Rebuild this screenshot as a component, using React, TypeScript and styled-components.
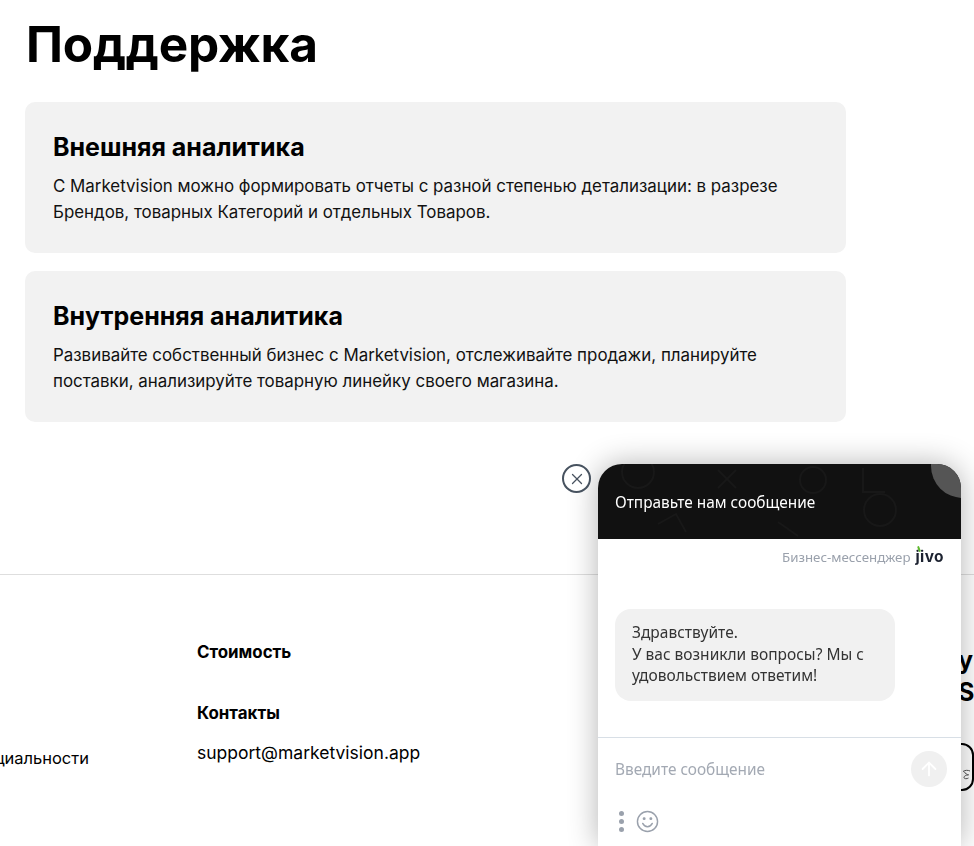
import React from 'react';
import styled, {createGlobalStyle} from "styled-components";
import {ArrowUp, X} from "lucide-react";

const GlobalStyle = createGlobalStyle`
    html, body {
        margin: 0;
        padding: 0;
        height: 100%;
        overflow: hidden;
        background: #fff;
        font-family: Inter, "Liberation Sans", sans-serif;
        color: #000;
    }
`;

const StyledPage = styled.div`
    width: 974px;
    height: 846px;
    overflow: hidden;
`;

const StyledMain = styled.main`
    height: 574px;
    box-sizing: border-box;
    padding: 10px 128px 0 25px;
`;

const StyledHeader = styled.h1`
    margin: 0 0 24px 1px;
    font-size: 49.5px;
    line-height: 68px;
    font-weight: 700;
    letter-spacing: -0.2px;
`;

const StyledCards = styled.div`
    display: flex;
    flex-direction: column;
    gap: 18px;
`;

const StyledCard = styled.section`
    height: 151px;
    box-sizing: border-box;
    padding: 28px 28px 0;
    background: #f2f2f2;
    border-radius: 10px;
`;

const StyledCardTitle = styled.h2`
    margin: 0 0 9px;
    font-size: 25px;
    line-height: 34px;
    font-weight: 700;
`;

const StyledCardText = styled.p`
    margin: 0;
    font-size: 16.9px;
    line-height: 26px;
    color: #111;
`;

const StyledFooter = styled.footer`
    height: 272px;
    box-sizing: border-box;
    border-top: 1px solid #dedede;
    display: grid;
    grid-template-columns: 89px 108px 761px 16px;
    padding-top: 66px;
`;

const StyledLegal = styled.div`
    display: flex;
    justify-content: flex-end;
    overflow: hidden;
    white-space: nowrap;
    padding-top: 105px;
    font-size: 16.5px;
    line-height: 24px;
`;

const StyledFooterColumn = styled.div`
    grid-column: 3;
    display: flex;
    flex-direction: column;
`;

const StyledFooterTitle = styled.b`
    font-size: 16.9px;
    line-height: 22px;
    font-weight: 700;
    margin-bottom: 39px;
`;

const StyledFooterLink = styled.span`
    font-size: 17.5px;
    line-height: 24px;
    margin-top: -22px;
`;

const StyledAside = styled.div`
    grid-column: 4;
    padding-top: 3px;
    display: flex;
    flex-direction: column;
    font-size: 25px;
    line-height: 32px;
    font-weight: 700;
`;

const StyledStoreButton = styled.div`
    margin: 35px 0 0 -20px;
    width: 36px;
    height: 48px;
    box-sizing: border-box;
    padding: 24px 0 0 22px;
    display: flex;
    align-items: flex-start;
    border: 2px solid #000;
    border-radius: 12px;
`;

const StyledWidget = styled.div`
    position: fixed;
    right: 13px;
    bottom: 0;
    width: 363px;
    height: 382px;
    display: flex;
    flex-direction: column;
    background: #fff;
    border-radius: 24px 24px 0 0;
    box-shadow: 0 0 30px rgba(0, 0, 0, 0.3);
    font-family: "Noto Sans", "Open Sans", sans-serif;
`;

const StyledClose = styled.button`
    position: absolute;
    left: -36px;
    top: 0;
    width: 29px;
    height: 29px;
    padding: 0;
    display: flex;
    align-items: center;
    justify-content: center;
    background: #fff;
    color: #47525f;
    border: 2px solid #47525f;
    border-radius: 50%;
`;

const StyledWidgetHeader = styled.div`
    position: relative;
    height: 75px;
    flex-shrink: 0;
    box-sizing: border-box;
    padding: 29px 17px 0;
    overflow: hidden;
    background: #111;
    border-radius: 24px 24px 0 0;
    color: #fff;
    font-size: 15.4px;
    line-height: 20px;

    &::after {
        content: "";
        position: absolute;
        top: -30px;
        right: -34px;
        width: 64px;
        height: 64px;
        border-radius: 50%;
        background: #555;
    }
`;

const StyledWidgetTitle = styled.span`
    position: relative;
`;

const StyledDoodles = styled.svg`
    position: absolute;
    inset: 0;
`;

const StyledBrandRow = styled.div`
    height: 70px;
    flex-shrink: 0;
    box-sizing: border-box;
    padding: 7px 17px 0;
    display: flex;
    justify-content: flex-end;
    align-items: flex-start;
    gap: 5px;
    color: #9aa1ac;
    font-size: 13.3px;
    line-height: 22px;
`;

const StyledLogo = styled.span`
    position: relative;
    color: #1c2230;
    font-family: Inter, sans-serif;
    font-size: 15.5px;
    font-weight: 700;
    line-height: 22px;
    letter-spacing: 0.4px;

    &::before {
        content: "";
        position: absolute;
        left: 3px;
        top: 0;
        width: 2px;
        height: 6px;
        background: #5fb82d;
        border-radius: 2px;
        transform: rotate(-20deg);
    }
`;

const StyledMessages = styled.div`
    height: 128px;
    flex-shrink: 0;
    box-sizing: border-box;
    padding: 0 17px;
`;

const StyledBubble = styled.div`
    width: 280px;
    height: 92px;
    box-sizing: border-box;
    padding: 13px 17px;
    background: #f1f1f1;
    border-radius: 16px;
    color: #333;
    font-size: 15.5px;
    line-height: 21.5px;
`;

const StyledComposer = styled.div`
    flex: 1;
    border-top: 1px solid #d8dfe6;
    padding: 13px 14px 0 17px;
    box-sizing: border-box;
`;

const StyledInputRow = styled.div`
    display: flex;
    align-items: center;
    justify-content: space-between;
    height: 36px;
`;

const StyledPlaceholder = styled.span`
    color: #a3a9b3;
    font-size: 15.4px;
`;

const StyledSend = styled.span`
    width: 36px;
    height: 36px;
    display: flex;
    align-items: center;
    justify-content: center;
    border-radius: 50%;
    background: #f0f0f0;
    color: #fff;
`;

const StyledTools = styled.div`
    display: flex;
    align-items: center;
    gap: 12px;
    margin-top: 23px;
    margin-left: 4px;
`;

const StyledDots = styled.span`
    display: flex;
    flex-direction: column;
    gap: 3px;

    i {
        display: block;
        width: 5px;
        height: 5px;
        border-radius: 50%;
        background: #9aa1ac;
    }
`;

const Smile = () => (
    <svg width="23" height="23" viewBox="0 0 24 24" fill="none" stroke="#9aa1ac" strokeWidth="1.5" strokeLinecap="round">
        <circle cx="12" cy="12" r="10.5"/>
        <path d="M7 14c1.2 2.4 3 3.4 5 3.4s3.8-1 5-3.4"/>
        <circle cx="8.5" cy="9" r="0.8" fill="#9aa1ac"/>
        <circle cx="15.5" cy="9" r="0.8" fill="#9aa1ac"/>
    </svg>
);

const App = () => {
    return (
        <StyledPage>
            <GlobalStyle/>
            <StyledMain>
                <StyledHeader>Поддержка</StyledHeader>
                <StyledCards>
                    <StyledCard>
                        <StyledCardTitle>Внешняя аналитика</StyledCardTitle>
                        <StyledCardText>
                            С Marketvision можно формировать отчеты с разной степенью детализации: в разрезе<br/>
                            Брендов, товарных Категорий и отдельных Товаров.
                        </StyledCardText>
                    </StyledCard>
                    <StyledCard>
                        <StyledCardTitle>Внутренняя аналитика</StyledCardTitle>
                        <StyledCardText>
                            Развивайте собственный бизнес с Marketvision, отслеживайте продажи, планируйте<br/>
                            поставки, анализируйте товарную линейку своего магазина.
                        </StyledCardText>
                    </StyledCard>
                </StyledCards>
            </StyledMain>
            <StyledFooter>
                <StyledLegal>Политика конфиденциальности</StyledLegal>
                <StyledFooterColumn>
                    <StyledFooterTitle>Стоимость</StyledFooterTitle>
                    <StyledFooterTitle>Контакты</StyledFooterTitle>
                    <StyledFooterLink>support@marketvision.app</StyledFooterLink>
                </StyledFooterColumn>
                <StyledAside>
                    <span>у</span>
                    <span>S</span>
                    <StyledStoreButton>
                        <svg width="9" height="11" viewBox="0 0 9 11" fill="none" stroke="#555" strokeWidth="1">
                            <path d="M1 2.5c2-1.5 5-1.5 7-.5M2 2.5c1 2 3 3 5 3.5M6 6c-2 0-4 1-4 2.5S5 10 6.5 9"/>
                        </svg>
                    </StyledStoreButton>
                </StyledAside>
            </StyledFooter>
            <StyledWidget>
                <StyledClose aria-label="Закрыть"><X size={18} strokeWidth={1.75}/></StyledClose>
                <StyledWidgetHeader>
                    <StyledDoodles width="363" height="75" viewBox="0 0 363 75" fill="none" stroke="#181818" strokeWidth="2">
                        <circle cx="40" cy="8" r="16"/>
                        <path d="M120 6l18 18M138 6l-18 18"/>
                        <circle cx="215" cy="16" r="13"/>
                        <path d="M265 4v24h22"/>
                        <circle cx="282" cy="46" r="16"/>
                        <path d="M180 58l20 14M60 60l18-10 10 18"/>
                    </StyledDoodles>
                    <StyledWidgetTitle>Отправьте нам сообщение</StyledWidgetTitle>
                </StyledWidgetHeader>
                <StyledBrandRow>
                    Бизнес-мессенджер
                    <StyledLogo>jivo</StyledLogo>
                </StyledBrandRow>
                <StyledMessages>
                    <StyledBubble>
                        Здравствуйте.<br/>
                        У вас возникли вопросы? Мы с удовольствием ответим!
                    </StyledBubble>
                </StyledMessages>
                <StyledComposer>
                    <StyledInputRow>
                        <StyledPlaceholder>Введите сообщение</StyledPlaceholder>
                        <StyledSend><ArrowUp size={22} strokeWidth={2}/></StyledSend>
                    </StyledInputRow>
                    <StyledTools>
                        <StyledDots><i/><i/><i/></StyledDots>
                        <Smile/>
                    </StyledTools>
                </StyledComposer>
            </StyledWidget>
        </StyledPage>
    );
};

export default App;
